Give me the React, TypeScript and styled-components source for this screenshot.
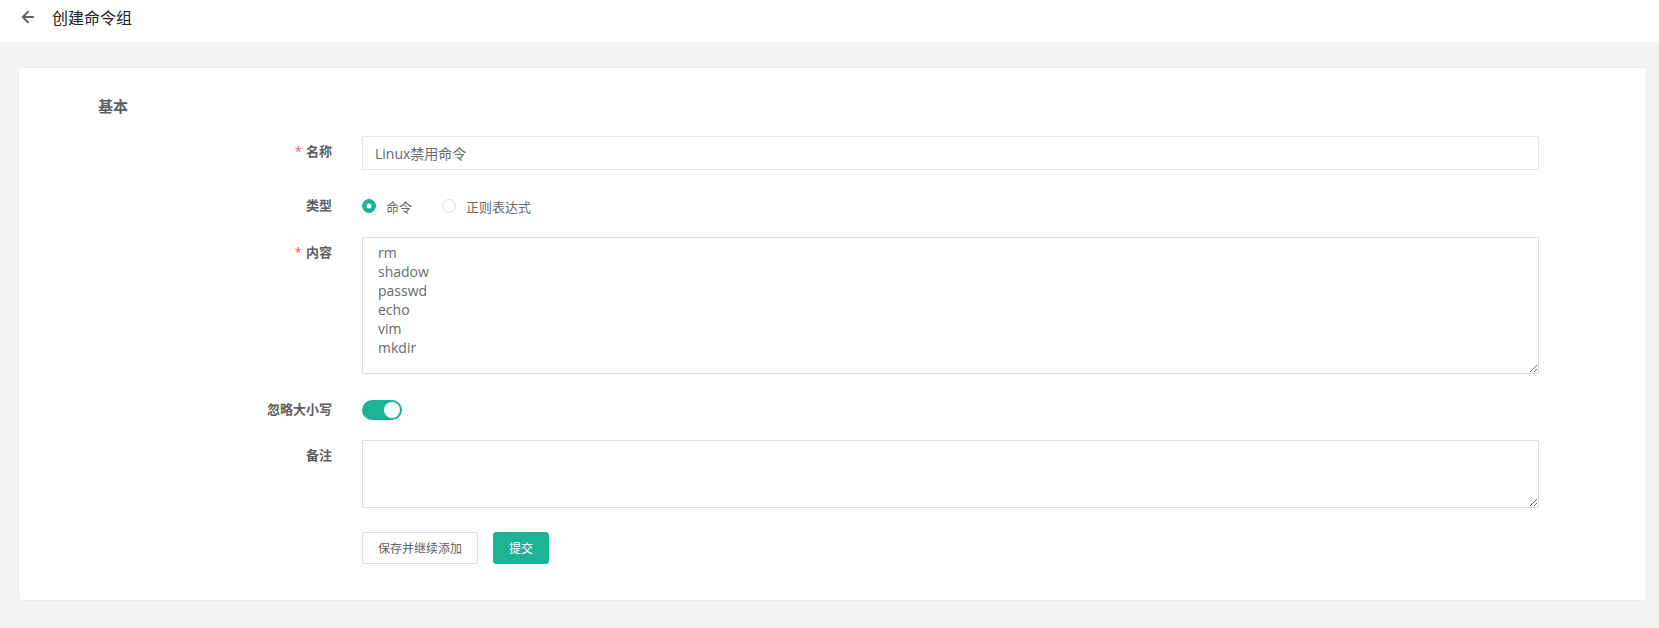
import React from 'react';
import styled, {createGlobalStyle} from "styled-components";
import {ArrowLeft} from "lucide-react";

const GlobalStyle = createGlobalStyle`
  html, body {
    margin: 0;
    padding: 0;
    background: #f3f3f4;
    font-family: "Open Sans", "Noto Sans CJK SC", sans-serif;
    color: #676a6c;
  }
  * {
    box-sizing: border-box;
  }
`

type RowPropsType = {
    label: string
    required?: boolean
    space: number
    children: React.ReactNode
}

const FormRow = (props: RowPropsType) => {
    return (
        <Row $space={props.space}>
            <Label>
                {props.required && <Star>*</Star>}
                {props.label}
            </Label>
            <Control>{props.children}</Control>
        </Row>
    );
};

type RadioPropsType = {
    checked?: boolean
    text: string
}

const Radio = (props: RadioPropsType) => {
    return (
        <RadioItem>
            <RadioDot $checked={props.checked}/>
            <span>{props.text}</span>
        </RadioItem>
    );
};

export default function App() {
    return (
        <>
            <GlobalStyle/>
            <Header>
                <BackIcon size={18} strokeWidth={2.4}/>
                <PageTitle>创建命令组</PageTitle>
            </Header>
            <Page>
                <Card>
                    <SectionTitle>基本</SectionTitle>
                    <FormRow label="名称" required space={20}>
                        <Input defaultValue="Linux禁用命令"/>
                    </FormRow>
                    <FormRow label="类型" space={13}>
                        <RadioGroup>
                            <Radio checked text="命令"/>
                            <Radio text="正则表达式"/>
                        </RadioGroup>
                    </FormRow>
                    <FormRow label="内容" required space={20}>
                        <TextArea $height={137}
                                  defaultValue={"rm\nshadow\npasswd\necho\nvim\nmkdir"}/>
                    </FormRow>
                    <FormRow label="忽略大小写" space={12}>
                        <SwitchWrap>
                            <Switch><Knob/></Switch>
                        </SwitchWrap>
                    </FormRow>
                    <FormRow label="备注" space={24}>
                        <TextArea $height={68}/>
                    </FormRow>
                    <FormRow label="" space={0}>
                        <Buttons>
                            <Button>保存并继续添加</Button>
                            <Button $primary>提交</Button>
                        </Buttons>
                    </FormRow>
                </Card>
            </Page>
        </>
    );
}

const Header = styled.header`
  height: 42px;
  background: #fff;
  display: flex;
  align-items: center;
  padding: 0 0 9px 19px;
`
const BackIcon = styled(ArrowLeft)`
  color: #5f6368;
`
const PageTitle = styled.h1`
  margin: 0 0 0 15px;
  font-size: 16px;
  font-weight: 400;
  color: #222;
`
const Page = styled.main`
  padding: 25px 12px 28px 18px;
`
const Card = styled.section`
  background: #fff;
  border: 1px solid #ebebee;
  border-radius: 4px;
  padding: 28px 107px 34px 79px;
`
const SectionTitle = styled.h2`
  margin: 0 0 20px;
  font-size: 15px;
  font-weight: 600;
  line-height: 20px;
  color: #5b5d60;
`
const Row = styled.div<{ $space: number }>`
  display: flex;
  align-items: flex-start;
  min-height: 34px;
  margin-bottom: ${p => p.$space}px;
`
const Label = styled.label`
  width: 264px;
  flex-shrink: 0;
  padding-right: 30px;
  text-align: right;
  font-size: 13px;
  font-weight: 700;
  line-height: 31px;
  color: #5b5d60;
`
const Star = styled.span`
  color: #ed5565;
  font-weight: 400;
  margin-right: 4px;
`
const Control = styled.div`
  flex: 1;
  min-width: 0;
`
const Input = styled.input`
  display: block;
  width: 100%;
  height: 34px;
  border: 1px solid #e5e6e7;
  border-radius: 1px;
  padding: 0 12px;
  font: inherit;
  font-size: 14px;
  color: #676a6c;
  outline: none;
`
const RadioGroup = styled.div`
  display: flex;
  align-items: center;
  gap: 30px;
  height: 32px;
`
const RadioItem = styled.label`
  display: flex;
  align-items: center;
  gap: 10px;
  font-size: 13px;
  color: #676a6c;
`
const RadioDot = styled.span<{ $checked?: boolean }>`
  width: 14px;
  height: 14px;
  border-radius: 50%;
  border: 1px solid ${p => p.$checked ? "#1ab394" : "#dcdfe6"};
  background: ${p => p.$checked ? "#1ab394" : "#fff"};
  position: relative;

  &::after {
    content: "";
    display: ${p => p.$checked ? "block" : "none"};
    position: absolute;
    left: 50%;
    top: 50%;
    width: 5px;
    height: 5px;
    border-radius: 50%;
    background: #fff;
    transform: translate(-50%, -50%);
  }
`
const TextArea = styled.textarea<{ $height: number }>`
  display: block;
  width: 100%;
  height: ${p => p.$height}px;
  border: 1px solid #dcdde3;
  border-radius: 1px;
  padding: 5px 15px;
  font: inherit;
  font-size: 14px;
  line-height: 19px;
  color: #676a6c;
  outline: none;
`
const SwitchWrap = styled.div`
  height: 30px;
  display: flex;
  align-items: center;
  padding-top: 2px;
`
const Switch = styled.span`
  display: flex;
  align-items: center;
  justify-content: flex-end;
  width: 40px;
  height: 20px;
  border-radius: 10px;
  background: #1ab394;
  padding: 0 2px;
`
const Knob = styled.span`
  width: 16px;
  height: 16px;
  border-radius: 50%;
  background: #fff;
`
const Buttons = styled.div`
  display: flex;
  gap: 15px;
`
const Button = styled.button<{ $primary?: boolean }>`
  height: 32px;
  padding: 0 15px;
  border-radius: 3px;
  font: inherit;
  font-size: 12px;
  border: 1px solid ${p => p.$primary ? "#1ab394" : "#dcdfe6"};
  background: ${p => p.$primary ? "#1ab394" : "#fff"};
  color: ${p => p.$primary ? "#fff" : "#606266"};
  cursor: pointer;
`
